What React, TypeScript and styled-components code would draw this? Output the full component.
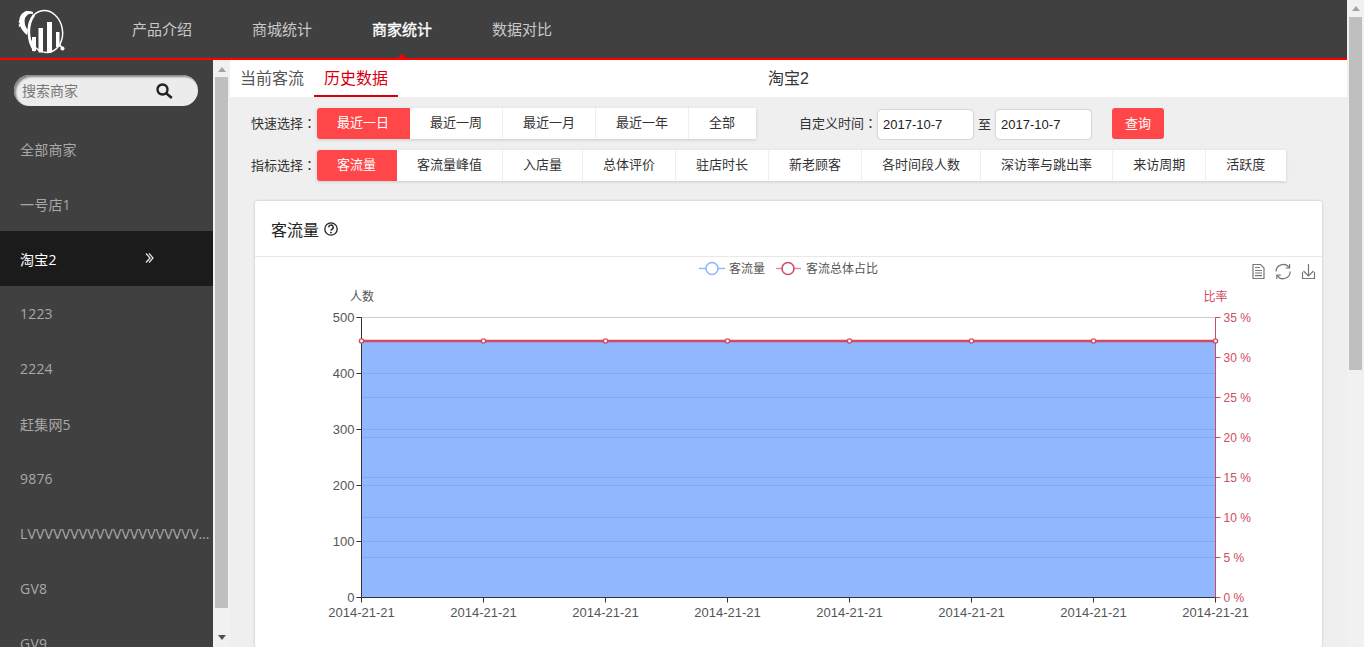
import React, { FC } from 'react'
import styled, { createGlobalStyle } from 'styled-components'

const NAV = ['产品介绍', '商城统计', '商家统计', '数据对比']
const SHOPS = ['全部商家', '一号店1', '淘宝2', '1223', '2224', '赶集网5', '9876', 'LVVVVVVVVVVVVVVVVVVVVVVVVV', 'GV8', 'GV9']
const QUICK = ['最近一日', '最近一周', '最近一月', '最近一年', '全部']
const METRICS = ['客流量', '客流量峰值', '入店量', '总体评价', '驻店时长', '新老顾客', '各时间段人数', '深访率与跳出率', '来访周期', '活跃度']

const LEFT_TICKS = [0, 100, 200, 300, 400, 500]
const RIGHT_TICKS = [0, 5, 10, 15, 20, 25, 30, 35]
const X_POINTS = [0, 1, 2, 3, 4, 5, 6, 7]

// chart coordinates, the svg starts at the left edge of the card
const CHART = { left: 106.5, right: 960.5, top: 61.5, bottom: 341.5, value: 85 }
const xAt = (i: number) => CHART.left + (i * (CHART.right - CHART.left)) / 7
const yLeft = (v: number) => CHART.bottom - (v / 500) * 280
const yRight = (v: number) => CHART.bottom - (v / 35) * 280

const Logo: FC = () => (
  <svg width="70" height="58" viewBox="0 0 70 58">
    <path d="M33 12 C26 9 20 13 19.5 20 C19 26 22 31 27 35 L28 30 C25 27 24 22 25 18 C27 14 30 13 33 14 Z" fill="#fff" />
    <path d="M19.5 27 C18.5 20 20.5 13.5 27 11" fill="none" stroke="#fff" strokeWidth="1" strokeDasharray="3 1" />
    <ellipse cx="45.5" cy="31.5" rx="17" ry="21" transform="rotate(-10 45.5 31.5)" fill="#404040" stroke="#fff" strokeWidth="1.5" />
    <path d="M34 15 C27 24 27 41 35 51" fill="none" stroke="#fff" strokeWidth="2.6" />
    <rect x="32" y="37" width="4" height="14" fill="#fff" />
    <rect x="38.5" y="28" width="4.5" height="24.5" fill="#fff" />
    <rect x="47" y="22" width="5" height="30.5" fill="#fff" />
    <rect x="56" y="32" width="3.5" height="15" fill="#fff" />
    <path d="M59 44 L63 49" stroke="#fff" strokeWidth="1.8" />
    <circle cx="62.5" cy="48.5" r="2" fill="#fff" />
  </svg>
)

const Chart: FC = () => (
  <ChartSvg width="1067" height="390" viewBox="0 1 1067 390">
    <rect x={CHART.left} y={CHART.value} width={CHART.right - CHART.left} height={CHART.bottom - CHART.value} fill="#91b7ff" />
    <line x1={CHART.left} x2={CHART.right} y1={CHART.top} y2={CHART.top} stroke="#ccc" />
    {LEFT_TICKS.slice(1, 5).map(v => (
      <line key={v} x1={CHART.left} x2={CHART.right} y1={yLeft(v)} y2={yLeft(v)} stroke="#81a8f2" />
    ))}
    {RIGHT_TICKS.slice(1, 6).map(v => (
      <line key={v} x1={CHART.left} x2={CHART.right} y1={yRight(v)} y2={yRight(v)} stroke="#81a8f2" />
    ))}

    <line x1={CHART.left} x2={CHART.left} y1={CHART.top} y2={CHART.bottom} stroke="#333" />
    <line x1={CHART.left} x2={CHART.right} y1={CHART.bottom} y2={CHART.bottom} stroke="#333" />
    <line x1={CHART.right} x2={CHART.right} y1={CHART.top} y2={CHART.bottom} stroke="#d14a61" />

    {LEFT_TICKS.map(v => (
      <g key={v}>
        <line x1={CHART.left - 5} x2={CHART.left} y1={yLeft(v)} y2={yLeft(v)} stroke="#333" />
        <AxisText x={CHART.left - 7} y={yLeft(v) + 4} textAnchor="end">{v}</AxisText>
      </g>
    ))}
    {RIGHT_TICKS.map(v => (
      <g key={v}>
        <line x1={CHART.right} x2={CHART.right + 5} y1={yRight(v)} y2={yRight(v)} stroke="#d14a61" />
        <RateText x={CHART.right + 8} y={yRight(v) + 4}>{v} %</RateText>
      </g>
    ))}
    {X_POINTS.map(i => (
      <g key={i}>
        <line x1={xAt(i)} x2={xAt(i)} y1={CHART.bottom} y2={CHART.bottom + 5} stroke="#333" />
        <AxisText x={xAt(i)} y={CHART.bottom + 19} textAnchor="middle">2014-21-21</AxisText>
      </g>
    ))}

    <LegendText x={107} y={45} textAnchor="middle">人数</LegendText>
    <RateText x={960.5} y={45} textAnchor="middle">比率</RateText>

    <line x1={CHART.left} x2={CHART.right} y1={CHART.value} y2={CHART.value} stroke="#d14a61" strokeWidth="2.4" />
    {X_POINTS.map(i => (
      <circle key={i} cx={xAt(i)} cy={CHART.value} r="2.1" fill="#fff" stroke="#d14a61" strokeWidth="1.4" />
    ))}

    <line x1="444" x2="470" y1="12.5" y2="12.5" stroke="#8fb5fd" strokeWidth="1.4" />
    <circle cx="457" cy="12.5" r="6" fill="#fff" stroke="#8fb5fd" strokeWidth="1.5" />
    <LegendText x={474} y={17}>客流量</LegendText>
    <line x1="521" x2="546" y1="12.5" y2="12.5" stroke="#e08a99" strokeWidth="1.4" />
    <circle cx="533" cy="12.5" r="6" fill="#fff" stroke="#d14a61" strokeWidth="1.5" />
    <LegendText x={551} y={17}>客流总体占比</LegendText>

    <g fill="none" stroke="#777" strokeWidth="1.2">
      <path d="M998 8.5 H1005.5 L1009 12 V22.5 H998 Z" />
      <path d="M1000 11.5 H1005 M1000 14.5 H1007 M1000 17 H1007 M1000 19.7 H1007" />
      <path d="M1021 15.5 A7.2 7.2 0 0 1 1034 11.5 M1035.2 15.5 A7.2 7.2 0 0 1 1022.4 20" />
      <path d="M1034.6 8 V12 H1030.6" />
      <path d="M1021.8 23 V19.2 H1025.8" />
      <path d="M1053.5 8 V20 M1048.5 15 L1053.5 20 L1058.5 15 M1047.5 16 V22.5 H1059.5 V16" />
    </g>
  </ChartSvg>
)

const App: FC = () => (
  <>
    <GlobalStyle />
    <S_Page>
      <S_Content>
        <S_Header>
          <S_Logo><Logo /></S_Logo>
          <S_Nav>
            {NAV.map((name, i) => <S_NavItem key={name} $active={i === 2}>{name}</S_NavItem>)}
          </S_Nav>
        </S_Header>

        <S_Body>
          <S_Sidebar>
            <S_SearchBox>
              <S_SearchText>搜索商家</S_SearchText>
              <svg width="17" height="16" viewBox="0 0 17 16">
                <circle cx="6.5" cy="6.5" r="5" fill="none" stroke="#222" strokeWidth="2.4" />
                <path d="M10.2 10.2 L15.8 15" stroke="#222" strokeWidth="2.6" />
              </svg>
            </S_SearchBox>
            <S_ShopList>
              {SHOPS.map((shop, i) => (
                <S_Shop key={shop} $active={i === 2}>
                  <S_ShopName>{shop}</S_ShopName>
                  {i === 2 && (
                    <S_Chevrons width="9" height="10" viewBox="0 0 9 10">
                      <path d="M1 .5 L5 5 L1 9.5 M4 .5 L8 5 L4 9.5" fill="none" stroke="#e0e0e0" strokeWidth="1.3" />
                    </S_Chevrons>
                  )}
                </S_Shop>
              ))}
            </S_ShopList>
          </S_Sidebar>

          <S_SideScroll>
            <S_Arrow $up />
            <S_SideThumb />
            <S_Arrow />
          </S_SideScroll>

          <S_Main>
            <S_TabBar>
              <S_Tab>当前客流</S_Tab>
              <S_Tab $active>历史数据</S_Tab>
              <S_ShopTitle>淘宝2</S_ShopTitle>
            </S_TabBar>

            <S_FilterRow>
              <S_Label>快速选择<S_Colon>：</S_Colon></S_Label>
              <S_Group>
                {QUICK.map((q, i) => <S_Option key={q} $active={i === 0}>{q}</S_Option>)}
              </S_Group>
              <S_DateLabel>自定义时间<S_Colon>：</S_Colon></S_DateLabel>
              <S_DateInput>2017-10-7</S_DateInput>
              <S_To>至</S_To>
              <S_DateInput>2017-10-7</S_DateInput>
              <S_Query>查询</S_Query>
            </S_FilterRow>

            <S_FilterRow>
              <S_Label>指标选择<S_Colon>：</S_Colon></S_Label>
              <S_Group>
                {METRICS.map((m, i) => <S_Option key={m} $active={i === 0}>{m}</S_Option>)}
              </S_Group>
            </S_FilterRow>

            <S_Card>
              <S_CardHead>
                客流量
                <svg width="14" height="14" viewBox="0 0 14 14">
                  <circle cx="7" cy="7" r="6.2" fill="none" stroke="#222" strokeWidth="1.3" />
                  <path d="M4.8 5.4 A2.2 2.2 0 1 1 7.8 7.3 C7.1 7.6 7 8 7 8.8" fill="none" stroke="#222" strokeWidth="1.4" />
                  <circle cx="7" cy="10.6" r="0.9" fill="#222" />
                </svg>
              </S_CardHead>
              <Chart />
            </S_Card>
          </S_Main>
        </S_Body>
      </S_Content>

      <S_PageScroll>
        <S_PageArrow />
        <S_PageThumb />
      </S_PageScroll>
    </S_Page>
  </>
)

export default App

const FONT = `"Liberation Sans", "Noto Sans CJK SC", sans-serif`

const GlobalStyle = createGlobalStyle`
  html, body {
    margin: 0;
    height: 100%;
    overflow: hidden;
    font-family: ${FONT};
    background: #efefef;
  }
  #root { height: 100%; }
`

const S_Page = styled.div`
  display: flex;
  height: 100%;
`

const S_Content = styled.div`
  flex: 1;
  min-width: 0;
  display: flex;
  flex-direction: column;
`

const S_Header = styled.header`
  flex: 0 0 60px;
  box-sizing: border-box;
  display: flex;
  background: #404040;
  border-bottom: 2px solid #f00;
`

const S_Logo = styled.div`
  width: 132px;

  svg { display: block; }
`

const S_Nav = styled.nav`
  display: flex;
  gap: 60px;
`

const S_NavItem = styled.a<{ $active?: boolean }>`
  position: relative;
  font-size: 15px;
  line-height: 60px;
  height: 58px;
  color: ${p => (p.$active ? '#fff' : '#c8c8c8')};
  -webkit-text-stroke: ${p => (p.$active ? '0.35px #fff' : '0')};

  ${p => p.$active && `
    &::after {
      content: '';
      position: absolute;
      left: 50%;
      bottom: 0;
      margin-left: -4px;
      border: 4px solid transparent;
      border-bottom-color: #f00;
      border-top: 0;
    }
  `}
`

const S_Body = styled.div`
  flex: 1;
  min-height: 0;
  display: flex;
`

const S_Sidebar = styled.aside`
  flex: 0 0 213px;
  background: #404040;
  overflow: hidden;
`

const S_SearchBox = styled.div`
  display: flex;
  align-items: center;
  justify-content: space-between;
  box-sizing: border-box;
  width: 184px;
  height: 31px;
  margin: 15px 0 0 14px;
  padding: 0 25px 0 8px;
  border-radius: 16px;
  background: #ececec;
  box-shadow: inset 2px 2px 2px #858585;
`

const S_SearchText = styled.span`
  padding-bottom: 2px;
  font-size: 14px;
  color: #777;
`

const S_ShopList = styled.ul`
  list-style: none;
  margin: 15px 0 0;
  padding: 0;
`

const S_Shop = styled.li<{ $active?: boolean }>`
  display: flex;
  align-items: center;
  height: 55px;
  padding-left: 20px;
  font-size: 14px;
  letter-spacing: 0.2px;
  font-family: "Open Sans", "Noto Sans CJK SC", sans-serif;
  color: ${p => (p.$active ? '#fff' : '#a8a8a8')};
  background: ${p => (p.$active ? '#1b1b1b' : 'transparent')};
`

const S_ShopName = styled.span`
  max-width: 190px;
  white-space: nowrap;
  overflow: hidden;
  text-overflow: ellipsis;
`

const S_Chevrons = styled.svg`
  margin: -2px 0 0 88px;
`

const S_SideScroll = styled.div`
  flex: 0 0 17px;
  display: flex;
  flex-direction: column;
  align-items: center;
  background: #f1f1f1;
`

const S_Arrow = styled.div<{ $up?: boolean }>`
  flex: 0 0 auto;
  margin: ${p => (p.$up ? '7px 0 5px' : 'auto 0 7px')};
  border: 4px solid transparent;
  border-width: ${p => (p.$up ? '0 4px 5px' : '5px 4px 0')};
  border-${p => (p.$up ? 'bottom' : 'top')}-color: ${p => (p.$up ? '#a3a3a3' : '#505050')};
`

const S_SideThumb = styled.div`
  width: 13px;
  height: 531px;
  background: #bfbfbf;
`

const S_Main = styled.main`
  flex: 1;
  min-width: 0;
  background: #efefef;
`

const S_TabBar = styled.div`
  position: relative;
  display: flex;
  height: 37px;
  background: #fff;
`

const S_Tab = styled.div<{ $active?: boolean }>`
  box-sizing: border-box;
  width: 84px;
  height: 37px;
  padding-top: 8px;
  text-align: center;
  font-size: 16px;
  line-height: 22px;
  color: ${p => (p.$active ? '#d7000f' : '#555')};
  border-bottom: 2px solid ${p => (p.$active ? '#d7000f' : 'transparent')};
`

const S_ShopTitle = styled.div`
  position: absolute;
  left: 0;
  right: 0;
  top: 8px;
  text-align: center;
  font-size: 16px;
  line-height: 22px;
  color: #333;
`

const S_FilterRow = styled.div`
  display: flex;
  align-items: center;
  height: 31px;
  margin-top: 11px;
  padding-left: 21px;
  font-size: 13px;
  color: #333;
`

const S_Label = styled.span`
  width: 66px;
  padding-bottom: 3px;
  white-space: nowrap;
`

const S_Colon = styled.span`
  font-family: "Noto Sans CJK TC", sans-serif;
`

const S_Group = styled.div`
  display: flex;
  box-shadow: 0 1px 3px rgba(0, 0, 0, 0.15);
`

const S_Option = styled.div<{ $active?: boolean }>`
  box-sizing: border-box;
  height: 31px;
  padding: 0 20px;
  line-height: 29px;
  white-space: nowrap;
  border-right: 1px solid #efefef;
  color: ${p => (p.$active ? '#fff' : '#333')};
  background: ${p => (p.$active ? '#ff4648' : '#fff')};

  &:first-child {
    border-radius: 3px 0 0 3px;
    border-right-color: #ff4648;
  }
  &:last-child { border-right: 1px solid #fff; }
`

const S_DateLabel = styled.span`
  margin-left: 43px;
  width: 79px;
  padding-bottom: 3px;
  white-space: nowrap;
`

const S_DateInput = styled.div`
  box-sizing: border-box;
  width: 95px;
  height: 29px;
  margin-top: 1px;
  padding-left: 5px;
  line-height: 30px;
  font-size: 13px;
  color: #222;
  background: #fff;
  border-radius: 4px;
  box-shadow: 0 0 2px rgba(0, 0, 0, 0.35);
`

const S_To = styled.span`
  margin: 0 5px;
  padding-bottom: 1px;
  font-size: 13px;
`

const S_Query = styled.button`
  width: 52px;
  height: 31px;
  margin-left: 21px;
  padding: 0 0 2px;
  border: 0;
  border-radius: 3px;
  color: #fff;
  font: inherit;
  background: #ff4648;
`

const S_Card = styled.section`
  margin: 20px 25px 0;
  background: #fff;
  box-shadow: 0 0 3px rgba(0, 0, 0, 0.2);
  border-radius: 2px;
`

const S_CardHead = styled.div`
  display: flex;
  align-items: center;
  gap: 5px;
  height: 56px;
  padding: 1px 0 0 16px;
  box-sizing: border-box;
  font-size: 16px;
  color: #222;
  border-bottom: 1px solid #e8e8e8;
`

const ChartSvg = styled.svg`
  display: block;
`

const AxisText = styled.text`
  font-family: ${FONT};
  font-size: 13px;
  fill: #555;
`

const RateText = styled.text`
  font-family: ${FONT};
  font-size: 12px;
  fill: #d14a61;
`

const LegendText = styled.text`
  font-family: ${FONT};
  font-size: 12px;
  fill: #555;
`

const S_PageScroll = styled.div`
  flex: 0 0 17px;
  display: flex;
  flex-direction: column;
  align-items: center;
  background: #f1f1f1;
`

const S_PageArrow = styled.div`
  margin-top: 6px;
  border: 4px solid transparent;
  border-width: 0 4px 5px;
  border-bottom-color: #a3a3a3;
`

const S_PageThumb = styled.div`
  width: 13px;
  height: 353px;
  margin-top: 6px;
  background: #bfbfbf;
`
